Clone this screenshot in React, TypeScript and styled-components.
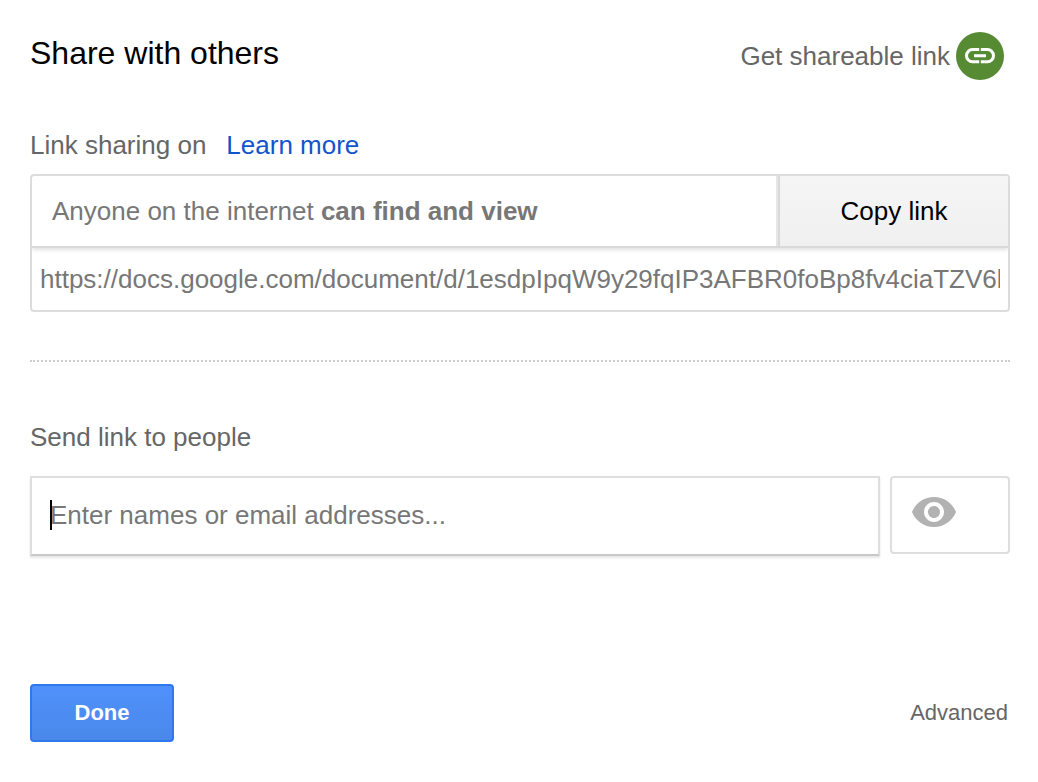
import React from "react";
import styled, { createGlobalStyle } from "styled-components";

const GlobalStyle = createGlobalStyle`
  * { box-sizing: border-box; }
  body {
    margin: 0;
    background: #fff;
    color: #666;
    font-family: "Liberation Sans", Arial, sans-serif;
    font-size: 26px;
    line-height: 30px;
  }
  button, input { font: inherit; margin: 0; }
`;

const Dialog = styled.main`
  padding: 32px 28px 40px 30px;
`;

const Header = styled.header`
  display: flex;
  justify-content: space-between;
  align-items: flex-start;
  padding-right: 6px;
`;

const Title = styled.h1`
  margin: 0;
  color: #000;
  font-size: 32px;
  font-weight: 400;
  line-height: 42px;
`;

const ShareableButton = styled.button`
  display: flex;
  align-items: center;
  gap: 6px;
  padding: 0;
  border: 0;
  background: none;
  color: #666;
  cursor: pointer;
`;

const Badge = styled.span`
  display: flex;
  align-items: center;
  justify-content: center;
  width: 48px;
  height: 48px;
  border-radius: 50%;
  background: #568b34;
`;

const StatusRow = styled.div`
  display: flex;
  gap: 20px;
  margin-top: 50px;
`;

const LearnMore = styled.a`
  color: #15c;
  text-decoration: none;
`;

const LinkBox = styled.section`
  margin-top: 14px;
  border: 2px solid #dcdcdc;
  border-radius: 4px;
`;

const AccessRow = styled.div`
  display: flex;
  height: 72px;
  border-bottom: 2px solid #d9d9d9;
  box-shadow: 0 2px 4px rgba(0, 0, 0, 0.12);
  clip-path: inset(0 0 -8px 0);
`;

const Access = styled.div`
  flex: 1;
  padding: 20px;
  border-right: 2px solid #e6e6e6;
  color: #777;
`;

const CopyButton = styled.button`
  width: 230px;
  border: 0;
  border-left: 2px solid #d9d9d9;
  background: linear-gradient(#f5f5f5, #f0f0f0);
  color: #000;
  cursor: pointer;
`;

const UrlRow = styled.div`
  display: flex;
  padding: 0 8px;
`;

const UrlInput = styled.input`
  flex: 1;
  min-width: 0;
  height: 62px;
  padding: 0;
  border: 0;
  outline: 0;
  background: none;
  color: #777;
`;

const Divider = styled.hr`
  margin: 48px 0 60px;
  border: 0;
  border-top: 2px dotted #ccc;
`;

const PeopleLabel = styled.label`
  display: block;
`;

const PeopleRow = styled.div`
  display: flex;
  align-items: flex-start;
  gap: 10px;
  margin-top: 24px;
`;

const PeopleField = styled.div`
  position: relative;
  flex: 1;
  display: flex;

  &::before {
    content: "";
    position: absolute;
    left: 20px;
    top: 24px;
    width: 2px;
    height: 30px;
    background: #000;
  }
`;

const PeopleInput = styled.input`
  flex: 1;
  min-width: 0;
  height: 80px;
  padding: 0 18px 2px;
  border: 2px solid #dedede;
  border-bottom-color: #c8c8c8;
  border-radius: 0;
  outline: 0;
  background: #fff;
  box-shadow: 0 2px 2px rgba(0, 0, 0, 0.1);
  color: #000;

  &::placeholder { color: #777; opacity: 1; }
`;

const PermissionButton = styled.button`
  display: flex;
  align-items: flex-start;
  width: 120px;
  height: 78px;
  padding: 10px 18px;
  border: 2px solid #dedede;
  border-radius: 4px;
  background: #fff;
  cursor: pointer;
`;

const Footer = styled.footer`
  display: flex;
  align-items: center;
  justify-content: space-between;
  margin-top: 128px;
  padding-right: 2px;
  font-size: 22px;
`;

const DoneButton = styled.button`
  width: 144px;
  height: 58px;
  padding: 0;
  border: 2px solid #3079ed;
  border-radius: 4px;
  background: linear-gradient(#4f91fb, #4a88ea);
  color: #fff;
  font-weight: 700;
  cursor: pointer;
`;

const AdvancedLink = styled.a`
  color: #666;
  text-decoration: none;
`;

function LinkIcon() {
  return (
    <svg
      width="30"
      height="16"
      viewBox="0 0 30 16"
      fill="none"
      stroke="#fff"
      strokeWidth="3"
      aria-hidden="true"
    >
      <path d="M14.2 1.6H7.6a6.1 6.1 0 0 0 0 12.2h6.6M15.8 1.6h6.6a6.1 6.1 0 0 1 0 12.2h-6.6M9 7.7h12" />
    </svg>
  );
}

function EyeIcon() {
  return (
    <svg width="48" height="48" viewBox="0 0 24 24" fill="#b2b2b2" aria-hidden="true">
      <path d="M12 4.5C7 4.5 2.73 7.61 1 12c1.73 4.39 6 7.5 11 7.5s9.27-3.11 11-7.5c-1.73-4.39-6-7.5-11-7.5zM12 17c-2.76 0-5-2.24-5-5s2.24-5 5-5 5 2.24 5 5-2.24 5-5 5zm0-8c-1.66 0-3 1.34-3 3s1.34 3 3 3 3-1.34 3-3-1.34-3-3-3z" />
    </svg>
  );
}

export default function App() {
  return (
    <>
      <GlobalStyle />
      <Dialog>
        <Header>
          <Title>Share with others</Title>
          <ShareableButton type="button">
            Get shareable link
            <Badge>
              <LinkIcon />
            </Badge>
          </ShareableButton>
        </Header>

        <StatusRow>
          <span>Link sharing on</span>
          <LearnMore href="#learn-more">Learn more</LearnMore>
        </StatusRow>

        <LinkBox>
          <AccessRow>
            <Access>
              Anyone on the internet <b>can find and view</b>
            </Access>
            <CopyButton type="button">Copy link</CopyButton>
          </AccessRow>
          <UrlRow>
            <UrlInput
              aria-label="Shareable link"
              readOnly
              value="https://docs.google.com/document/d/1esdpIpqW9y29fqIP3AFBR0foBp8fv4ciaTZV6l"
            />
          </UrlRow>
        </LinkBox>

        <Divider />

        <PeopleLabel htmlFor="people">Send link to people</PeopleLabel>
        <PeopleRow>
          <PeopleField>
            <PeopleInput id="people" type="text" placeholder="Enter names or email addresses..." />
          </PeopleField>
          <PermissionButton type="button" aria-label="Can view">
            <EyeIcon />
          </PermissionButton>
        </PeopleRow>

        <Footer>
          <DoneButton type="button">Done</DoneButton>
          <AdvancedLink href="#advanced">Advanced</AdvancedLink>
        </Footer>
      </Dialog>
    </>
  );
}
